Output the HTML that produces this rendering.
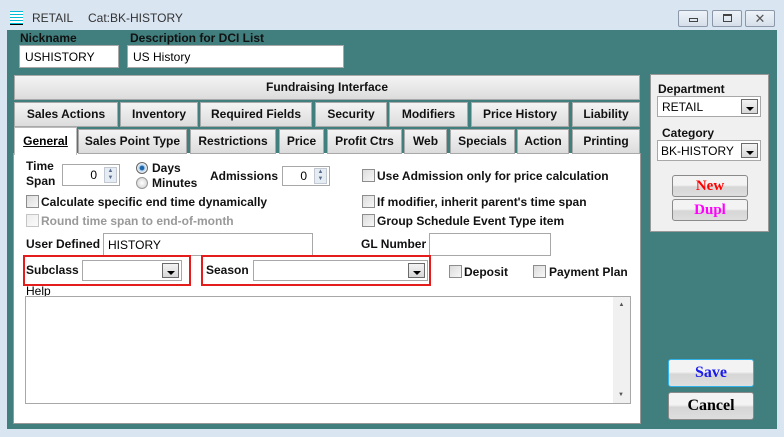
<!DOCTYPE html>
<html><head><style>
*{box-sizing:border-box;margin:0;padding:0}
body{width:784px;height:437px;background:#dae5f2;font-family:"Liberation Sans",sans-serif;font-size:12px;position:relative;overflow:hidden}
.a{position:absolute}
.b{font-weight:bold;color:#111}
.inp{position:absolute;background:#fff;border:1px solid #a8a8a8}
.tab{position:absolute;background:linear-gradient(#f4f4f4,#dcdcdc);border:1px solid #a9a9a9;font-weight:bold;text-align:center;color:#111;font-size:12px}
.cb{position:absolute;width:13px;height:13px;border:1px solid #8d8d8d;background:linear-gradient(135deg,#dcdcdc,#f7f7f7)}
.combo{position:absolute;background:#fff;border:1px solid #a8a8a8}
.dd{position:absolute;right:2px;top:2px;bottom:2px;width:17px;border:1px solid #6b6b6b;background:linear-gradient(#f3f3f3,#d8d8d8)}
.dd:after{content:"";position:absolute;left:4px;top:7px;border-left:4px solid transparent;border-right:4px solid transparent;border-top:4px solid #000}
.btn{position:absolute;border:1px solid #8a8a8a;border-radius:3px;background:linear-gradient(#f3f3f3 45%,#d6d6d6 55%,#dedede);font-family:"Liberation Serif",serif;font-weight:bold;text-align:center}
.wb{position:absolute;top:10px;height:17px;border:1px solid #8a98aa;border-radius:2px;background:linear-gradient(#eef3f9,#d6dfea)}
</style></head><body>
<!-- title -->
<div class="a" style="left:10px;top:11px;width:13px;height:14px;background:repeating-linear-gradient(#00bcd4 0 1px,#fff 1px 3px);border-bottom:1px solid #000"></div>
<div class="a" style="left:32px;top:11px;color:#333;font-size:12px">RETAIL</div>
<div class="a" style="left:88px;top:11px;color:#333;font-size:12px">Cat:BK-HISTORY</div>
<div class="wb" style="left:678px;width:30px"><div class="a" style="left:10px;top:7px;width:9px;height:4px;border:1px solid #444"></div></div>
<div class="wb" style="left:712px;width:30px"><div class="a" style="left:10px;top:3px;width:9px;height:8px;border:1px solid #444;border-top-width:2px"></div></div>
<div class="wb" style="left:745px;width:30px;text-align:center;line-height:15px;color:#555;font-size:13px">✕</div>
<!-- teal -->
<div class="a" style="left:7px;top:30px;width:770px;height:399px;background:#417e7e"></div>
<div class="a b" style="left:20px;top:31px">Nickname</div>
<div class="a b" style="left:130px;top:31px">Description for DCI List</div>
<div class="inp" style="left:19px;top:45px;width:100px;height:23px;padding:4px 5px">USHISTORY</div>
<div class="inp" style="left:127px;top:45px;width:217px;height:23px;padding:4px 5px">US History</div>
<!-- fundraising -->
<div class="tab" style="left:14px;top:75px;width:626px;height:25px;line-height:23px">Fundraising Interface</div>
<div class="tab" style="left:14px;top:102px;width:104px;height:25px;line-height:23px">Sales Actions</div>
<div class="tab" style="left:120px;top:102px;width:78px;height:25px;line-height:23px">Inventory</div>
<div class="tab" style="left:200px;top:102px;width:112px;height:25px;line-height:23px">Required Fields</div>
<div class="tab" style="left:315px;top:102px;width:72px;height:25px;line-height:23px">Security</div>
<div class="tab" style="left:389px;top:102px;width:79px;height:25px;line-height:23px">Modifiers</div>
<div class="tab" style="left:471px;top:102px;width:98px;height:25px;line-height:23px">Price History</div>
<div class="tab" style="left:572px;top:102px;width:68px;height:25px;line-height:23px">Liability</div>
<!-- panel -->
<div class="a" style="left:13px;top:153px;width:628px;height:271px;background:#fff;border:1px solid #999;border-top:none"></div>
<div class="a" style="left:14px;top:127px;width:63px;height:28px;background:#fff;border:1px solid #bbb;border-bottom:none;font-weight:bold;text-decoration:underline;text-align:center;line-height:26px">General</div>
<div class="tab" style="left:78px;top:129px;width:109px;height:25px;line-height:23px">Sales Point Type</div>
<div class="tab" style="left:190px;top:129px;width:86px;height:25px;line-height:23px">Restrictions</div>
<div class="tab" style="left:279px;top:129px;width:45px;height:25px;line-height:23px">Price</div>
<div class="tab" style="left:327px;top:129px;width:75px;height:25px;line-height:23px">Profit Ctrs</div>
<div class="tab" style="left:404px;top:129px;width:43px;height:25px;line-height:23px">Web</div>
<div class="tab" style="left:450px;top:129px;width:65px;height:25px;line-height:23px">Specials</div>
<div class="tab" style="left:517px;top:129px;width:52px;height:25px;line-height:23px">Action</div>
<div class="tab" style="left:572px;top:129px;width:68px;height:25px;line-height:23px">Printing</div>
<!-- content -->
<div class="a b" style="left:26px;top:159px;line-height:15px">Time<br>Span</div>
<div class="inp" style="left:62px;top:164px;width:58px;height:22px;text-align:right;padding:3px 22px 0 0">0</div>
<div class="a" style="left:104px;top:167px;width:13px;height:16px;background:#e6ecf3;border:1px solid #c3c9d2;font-size:6px;color:#5a6c8e;text-align:center;line-height:7px">▲<br>▼</div>
<div class="a" style="left:136px;top:162px;width:12px;height:12px;border-radius:50%;border:1px solid #666;background:radial-gradient(#1e66aa 30%,#9cc6ea 35%,#e8eef5 60%)"></div>
<div class="a b" style="left:152px;top:161px">Days</div>
<div class="a" style="left:136px;top:177px;width:12px;height:12px;border-radius:50%;border:1px solid #999;background:radial-gradient(#fff,#ccc)"></div>
<div class="a b" style="left:152px;top:176px">Minutes</div>
<div class="a b" style="left:210px;top:169px">Admissions</div>
<div class="inp" style="left:282px;top:166px;width:48px;height:20px;text-align:right;padding:2px 22px 0 0">0</div>
<div class="a" style="left:314px;top:168px;width:13px;height:16px;background:#e6ecf3;border:1px solid #c3c9d2;font-size:6px;color:#5a6c8e;text-align:center;line-height:7px">▲<br>▼</div>
<div class="cb" style="left:362px;top:169px"></div><div class="a b" style="left:377px;top:169px">Use Admission only for price calculation</div>
<div class="cb" style="left:26px;top:195px"></div><div class="a b" style="left:41px;top:195px">Calculate specific end time dynamically</div>
<div class="cb" style="left:26px;top:214px;opacity:.5"></div><div class="a" style="left:41px;top:214px;font-weight:bold;color:#999">Round time span to end-of-month</div>
<div class="cb" style="left:362px;top:195px"></div><div class="a b" style="left:377px;top:195px">If modifier, inherit parent's time span</div>
<div class="cb" style="left:362px;top:214px"></div><div class="a b" style="left:377px;top:214px">Group Schedule Event Type item</div>
<div class="a b" style="left:26px;top:237px">User Defined</div>
<div class="inp" style="left:103px;top:233px;width:210px;height:23px;padding:4px 4px">HISTORY</div>
<div class="a b" style="left:361px;top:237px">GL Number</div>
<div class="inp" style="left:429px;top:233px;width:122px;height:23px"></div>
<div class="a" style="left:23px;top:255px;width:168px;height:31px;border:2px solid #e51c1c"></div>
<div class="a b" style="left:26px;top:263px">Subclass</div>
<div class="combo" style="left:82px;top:260px;width:100px;height:21px"><div class="dd"></div></div>
<div class="a" style="left:201px;top:255px;width:230px;height:31px;border:2px solid #e51c1c"></div>
<div class="a b" style="left:206px;top:263px">Season</div>
<div class="combo" style="left:253px;top:260px;width:175px;height:21px"><div class="dd"></div></div>
<div class="cb" style="left:449px;top:265px"></div><div class="a b" style="left:464px;top:265px">Deposit</div>
<div class="cb" style="left:533px;top:265px"></div><div class="a b" style="left:549px;top:265px">Payment Plan</div>
<div class="a" style="left:26px;top:284px;color:#000">Help</div>
<div class="inp" style="left:25px;top:296px;width:606px;height:108px"><div class="a" style="right:0;top:0;bottom:0;width:17px;background:#f0f0f0;font-size:6px;color:#555;text-align:center"><div style="margin-top:5px">▲</div><div class="a" style="bottom:5px;left:5px">▼</div></div></div>
<!-- right panel -->
<div class="a" style="left:650px;top:74px;width:119px;height:158px;background:#f0f0f0;border:1px solid #999"></div>
<div class="a b" style="left:658px;top:82px">Department</div>
<div class="combo" style="left:657px;top:96px;width:104px;height:21px;padding:3px 4px">RETAIL<div class="dd"></div></div>
<div class="a b" style="left:662px;top:126px">Category</div>
<div class="combo" style="left:657px;top:140px;width:104px;height:21px;padding:3px 3px">BK-HISTORY<div class="dd"></div></div>
<div class="btn" style="left:672px;top:175px;width:76px;height:22px;line-height:20px;color:#f00;font-size:15px">New</div>
<div class="btn" style="left:672px;top:199px;width:76px;height:22px;line-height:20px;color:#f0f;font-size:15px">Dupl</div>
<div class="btn" style="left:668px;top:359px;width:86px;height:28px;line-height:26px;color:#1a1aee;font-size:16px;border-color:#2fb3ea">Save</div>
<div class="btn" style="left:668px;top:392px;width:86px;height:28px;line-height:26px;color:#000;font-size:16px">Cancel</div>
</body></html>
